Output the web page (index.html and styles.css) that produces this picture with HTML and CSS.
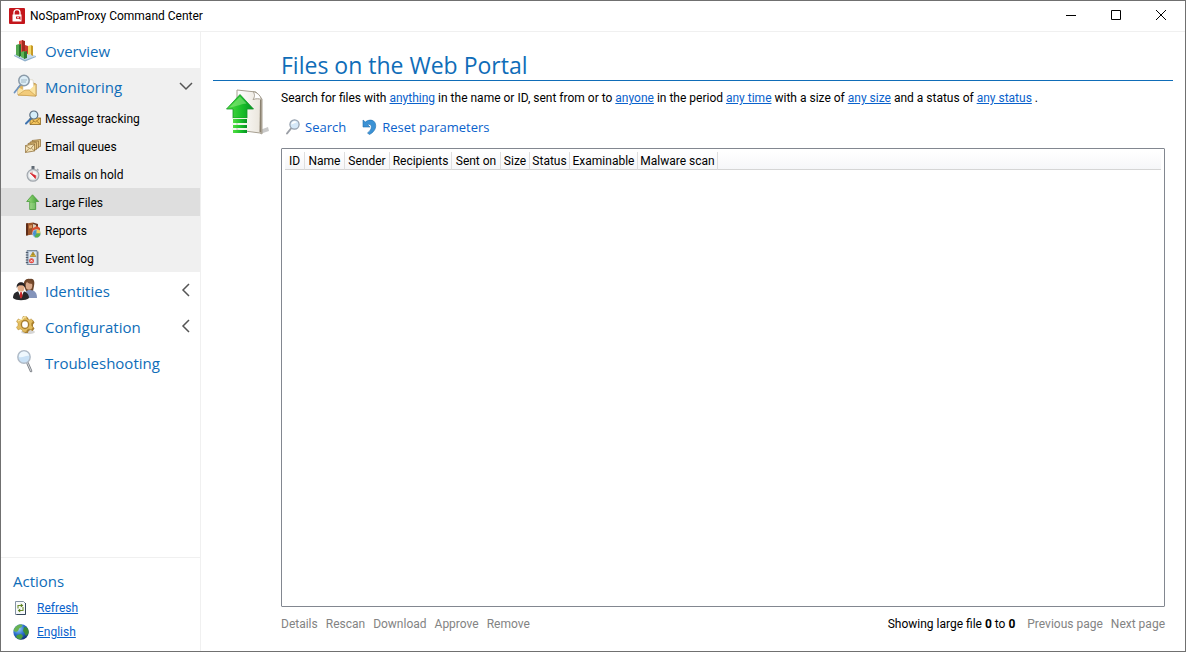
FILE: index.html
```html
<!DOCTYPE html>
<html lang="en">
<head>
    <meta charset="UTF-8">
    <meta name="viewport" content="width=device-width, initial-scale=1.0">
    <title>NoSpamProxy Command Center</title>
    <link rel="stylesheet" href="styles.css">
</head>
<body>
    <header class="titlebar">
        <svg class="app-icon" width="16" height="16" viewBox="0 0 16 16">
            <rect width="16" height="16" rx="1" fill="#c4161c"/>
            <path d="M5 7V4.500a3 2.800 0 0 1 6 0V7" fill="none" stroke="#fff" stroke-width="1.300"/>
            <path d="M3.500 6.500h9v7h-9z" fill="#fff"/>
            <path d="M7 8.500h4.500v3.500L10 10.800H7z" fill="#c4161c"/>
            <path d="M8 9.600h2" stroke="#fff" stroke-width=".8"/>
        </svg>
        <span class="app-name">NoSpamProxy Command Center</span>
        <div class="window-buttons">
            <button type="button" aria-label="Minimize"><svg width="12" height="12" viewBox="0 0 12 12"><path d="M1 5.500h10"/></svg></button>
            <button type="button" aria-label="Maximize"><svg width="12" height="12" viewBox="0 0 12 12"><path d="M1.500 .5h9v9h-9z"/></svg></button>
            <button type="button" aria-label="Close"><svg width="12" height="12" viewBox="0 0 12 12"><path d="M1 0l10 10M11 0L1 10"/></svg></button>
        </div>
    </header>

    <div class="window-body">
        <aside class="sidebar">
            <nav>
                <a class="nav-item" href="#overview">
                    <svg width="24" height="24" viewBox="0 0 24 24">
                        <path d="M1 17l10-4 12 5-11 5z" fill="#c3d9ec"/>
                        <path d="M1 17l11 5 11-4v1l-11 4.500L1 18z" fill="#8fb0cc"/>
                        <path d="M6 3l4-1v14l-4 1z" fill="#e0584a"/><path d="M9 2l3 1v15l-3-2z" fill="#a52a20"/>
                        <path d="M15 8l3-1v9l-3 1z" fill="#f3d867"/><path d="M18 7l2 1v10l-2-1z" fill="#c79a26"/>
                        <path d="M3 7l3-1 1 1v12l-4-2z" fill="#54a850"/><path d="M6 7l2-1v12l-2 1z" fill="#26702d"/>
                        <path d="M12 7l3 1v8l-3-1z" fill="#c93a2d"/>
                        <path d="M8 14l3-1 1 1v7l-4-2z" fill="#5db556"/><path d="M11 14l3-1v7l-3 1z" fill="#2c7a31"/>
                    </svg>
                    <span>Overview</span>
                </a>

                <div class="nav-group">
                    <a class="nav-item" href="#monitoring">
                        <svg width="24" height="24" viewBox="0 0 24 24">
                            <path d="M5 13l10-6 8 3v12L5 21z" fill="#e3b75f" stroke="#b78a3a" stroke-width=".7"/>
                            <path d="M10 5l10 1 1 9-11 2z" fill="#fff" stroke="#cfc6ad" stroke-width=".5"/>
                            <path d="M5 13l9 5 9-8v12L5 21z" fill="#fbe3a0"/>
                            <path d="M5 21l7-5h4l7 6z" fill="#f2cb7a" stroke="#c49848" stroke-width=".6"/>
                            <path d="M23 10v12" stroke="#b78a3a" stroke-width=".7"/>
                            <path d="M7 11.500L1.500 18.500" stroke="#6f94c0" stroke-width="1.800" stroke-linecap="round"/>
                            <circle cx="11" cy="6.500" r="5.200" fill="#d9ecf7" fill-opacity=".9" stroke="#8a9aa8" stroke-width="1.500"/>
                            <path d="M8 6h6M8 8h5" stroke="#92a9b8" stroke-width=".8"/>
                        </svg>
                        <span>Monitoring</span>
                        <svg class="chevron" width="14" height="14" viewBox="0 0 14 14"><path d="M1 4l6 6 6-6"/></svg>
                    </a>
                    <a class="nav-sub" href="#tracking">
                        <svg width="16" height="16" viewBox="0 0 16 16">
                            <path d="M5 8h10.500v6.500H5z" fill="#f4c55e" stroke="#8f6a22" stroke-width=".8"/>
                            <path d="M5 8l5.300 4L15.500 8M5 14.500l4-3.500M15.500 14.500l-4-3.500" fill="none" stroke="#8f6a22" stroke-width=".7"/>
                            <path d="M6 8.500L1 13.500" stroke="#3f74b0" stroke-width="2" stroke-linecap="round"/>
                            <circle cx="8.800" cy="5" r="4" fill="#d5eefa" stroke="#5c6f80" stroke-width="1.200"/>
                        </svg>
                        <span>Message tracking</span>
                    </a>
                    <a class="nav-sub" href="#queues">
                        <svg width="16" height="16" viewBox="0 0 16 16" stroke="#8d6c35" stroke-width=".7" fill="#e0c07e">
                            <path d="M7 2.500l8.500-1v7l-8 2z"/><path d="M5 4l8.500-1v7l-8 2z"/><path d="M3 5.500l8.500-1v7l-8 2z"/>
                            <path d="M.5 7.500l9-1.500v7l-9 1.500z" fill="#f4e3b8"/>
                            <path d="M.5 7.500l5 3.500 4-5M.5 14.500l3.500-4M9.500 13l-3-2.700" fill="none"/>
                        </svg>
                        <span>Email queues</span>
                    </a>
                    <a class="nav-sub" href="#hold">
                        <svg width="16" height="16" viewBox="0 0 16 16">
                            <path d="M6.500 0h3v3.500h-3z" fill="#5f6973"/><path d="M12 3l1.500 1.500" stroke="#a0a6ad" stroke-width="1.500"/>
                            <circle cx="8" cy="9.300" r="5.900" fill="#dce0e4" stroke="#a2a8ae" stroke-width="1.200"/>
                            <circle cx="8" cy="9.300" r="4" fill="#f6f6f6"/>
                            <path d="M8 9.300L4.800 7A4 4 0 0 1 8 5.300zM8 9.300l4 .2A4 4 0 0 1 9.800 13z" fill="#dfb9b7"/>
                            <path d="M5 7l5.500 2.500v3z" fill="#d8232c" stroke="#d8232c" stroke-width=".5"/>
                        </svg>
                        <span>Emails on hold</span>
                    </a>
                    <a class="nav-sub active" href="#files" aria-current="page">
                        <svg width="16" height="16" viewBox="0 0 16 16">
                            <defs><linearGradient id="leaf"><stop offset="0" stop-color="#a0df7e"/><stop offset="1" stop-color="#3c9c34"/></linearGradient></defs>
                            <path d="M7.500.8l6.200 6.700h-3v8h-6v-8h-3z" fill="url(#leaf)" stroke="#499b3b" stroke-width=".8"/>
                            <path d="M5 10h5M5 12h5M5 14h5" stroke="#d1efc3" stroke-width=".5"/>
                        </svg>
                        <span>Large Files</span>
                    </a>
                    <a class="nav-sub" href="#reports">
                        <svg width="16" height="16" viewBox="0 0 16 16">
                            <path d="M1 1.500l7-1v12l-7 1z" fill="#9c562c"/><path d="M1 1.500l2-.3v12l-2 .3z" fill="#5e2d18"/>
                            <path d="M4 3.500l3-.4v3l-3 .4z" fill="#d99258"/>
                            <path d="M8 .5l5 1.500v9l-5 1.500z" fill="#6e3620"/><path d="M8 2l3 1v4L8 6z" fill="#d9cdb8"/>
                            <path d="M7 6.500l5-2.500 3 2v5l-8 2z" fill="#d8502f"/>
                            <circle cx="11.500" cy="11.500" r="4" fill="#4a91ce" stroke="#e9f1f6" stroke-width=".5"/>
                            <path d="M11.500 11.500V7.500a4 4 0 0 1 4 4z" fill="#f0d055"/><path d="M11.500 11.500h4a4 4 0 0 1-6 3.400z" fill="#58b04b"/>
                        </svg>
                        <span>Reports</span>
                    </a>
                    <a class="nav-sub" href="#events">
                        <svg width="16" height="16" viewBox="0 0 16 16">
                            <path d="M2 .5h10v14H2z" fill="#b5c4d5" stroke="#66778c" stroke-width=".8"/>
                            <path d="M12 1.500h1.500V15H12z" fill="#7b8794"/><path d="M4 2h7.500v12H4z" fill="#dce6f0"/>
                            <path d="M.8 2.500h2.400M.8 5h2.400M.8 7.500h2.400M.8 10h2.400M.8 12.500h2.400" stroke="#505d6c"/>
                            <path d="M8 2l2.800 4.500H5.200z" fill="#f1c52d" stroke="#8a711c" stroke-width=".6"/><path d="M8 3.500v2" stroke="#333" stroke-width=".8"/>
                            <circle cx="6.500" cy="10.800" r="2.500" fill="#e34b43"/><path d="M5.500 9.800l2 2M7.500 9.800l-2 2" stroke="#fff" stroke-width=".8"/>
                        </svg>
                        <span>Event log</span>
                    </a>
                </div>

                <a class="nav-item" href="#identities">
                    <svg width="24" height="24" viewBox="0 0 24 24">
                        <path d="M11 8c-1-5 2-8 6-7 4-1 5 3 4 7l-1 5h-7z" fill="#6b4429"/>
                        <path d="M11 20c0-6 2-8 6-8 5 0 7 3 7 8z" fill="#8494bb"/>
                        <ellipse cx="16" cy="7.500" rx="3.300" ry="4.300" fill="#d9a98a"/>
                        <path d="M12 5c2-4 7-4 8 1-3 0-5-1-6-2z" fill="#7a4c2d"/>
                        <path d="M0 20c0-5 3-7 8-7s8 3 8 7c-3 3-13 3-16 0z" fill="#28282b"/>
                        <path d="M5 13h6l-3 7z" fill="#fff"/><path d="M7.400 14h1.300l.9 4-1.600 3-1.400-3z" fill="#c82528"/>
                        <ellipse cx="8" cy="9.500" rx="3.500" ry="4.300" fill="#e2ad89"/>
                        <path d="M3.800 10C2.500 3 13 2 12.300 10 11 8 10 7 8 7.500 6 7 4.500 8 3.800 10z" fill="#252123"/>
                    </svg>
                    <span>Identities</span>
                    <svg class="chevron" width="14" height="14" viewBox="0 0 14 14"><path d="M10 1L4 7l6 6"/></svg>
                </a>
                <a class="nav-item" href="#configuration">
                    <svg width="24" height="24" viewBox="0 0 24 24">
                        <ellipse cx="15" cy="18" rx="7" ry="2" fill="#bbb" opacity=".6"/>
                        <path d="M11.500 3.500h3.500l.7 2.500 2 .9 2.200-1 1.600 2.500-1.500 2v2l1.500 2-1.800 2.500-2.300-1-1.800 1-.7 2.100h-3.400z" fill="#a67c2c"/>
                        <path d="M10 2.500h3.500l.7 2.500 2 .9 2.200-1 1.600 2.500-1.500 2v2l1.500 2-1.800 2.500-2.300-1-1.800 1-.7 2.100H10l-.8-2.100-2-1-2 1-1.700-2.500 1.500-2v-2l-1.500-2 1.800-2.500 2 1 2-.9z" fill="#e3bd5f" stroke="#b38a36" stroke-width=".5"/>
                        <path d="M5 7l2-1 3-1 1-2h2" fill="none" stroke="#fff1b6"/>
                        <ellipse cx="12" cy="10.500" rx="3.600" ry="4" fill="#fff" stroke="#a87e2c" stroke-width="1.400"/>
                    </svg>
                    <span>Configuration</span>
                    <svg class="chevron" width="14" height="14" viewBox="0 0 14 14"><path d="M10 1L4 7l6 6"/></svg>
                </a>
                <a class="nav-item" href="#troubleshooting">
                    <svg width="24" height="24" viewBox="0 0 24 24">
                        <path d="M14.500 13l3.500 8" stroke="#7d8187" stroke-width="2.600" stroke-linecap="round"/>
                        <path d="M14.500 13l3.500 8" stroke="#d5d8dc" stroke-linecap="round"/>
                        <circle cx="11" cy="7" r="6.200" fill="#c9e1f6" stroke="#b0bac6" stroke-width="1.400"/>
                        <path d="M6 7a5 5 0 0 1 10-1c-3-1-6 2-10 1z" fill="#eff8fe"/>
                    </svg>
                    <span>Troubleshooting</span>
                </a>
            </nav>

            <section class="actions">
                <h2>Actions</h2>
                <a href="#refresh">
                    <svg width="16" height="16" viewBox="0 0 16 16">
                        <path d="M2.500 1.500h8l2 2v11h-10z" fill="#f7f9fb" stroke="#8493a3"/>
                        <path d="M12.500 3v11.500h-9" fill="none" stroke="#34465a"/>
                        <path d="M5 8.500V5.500h3M10 7v3.500H7" fill="none" stroke="#6b8e2a" stroke-width="1.100"/>
                        <path d="M7.800 3.500L10.300 5.500 7.800 7.500zM7.200 8.500L4.700 10.500l2.500 2z" fill="#5b7e1c"/>
                    </svg>
                    <span>Refresh</span>
                </a>
                <a href="#english">
                    <svg width="16" height="16" viewBox="0 0 16 16">
                        <defs><radialGradient id="sea" cx=".35" cy=".3" r=".75"><stop offset="0" stop-color="#9bd2fb"/><stop offset=".5" stop-color="#2e73cf"/><stop offset="1" stop-color="#0c2b6e"/></radialGradient></defs>
                        <circle cx="8" cy="8" r="7.700" fill="url(#sea)"/>
                        <path d="M3 2.500C6-.2 9 .4 9.500 1.500L8 3.500 6.500 4 5 7 3 8 .6 7C.8 5 1.500 3.700 3 2.500z" fill="#69b253"/>
                        <path d="M11 3l3 .5c1.500 2 2 4 1.500 6L13 12l-1.500-3L10 7z" fill="#3c8c35"/>
                        <path d="M4 11l4-1 2 2-2 3.500c-2 0-4-1-5-2.500z" fill="#4c9d3e"/>
                    </svg>
                    <span>English</span>
                </a>
            </section>
        </aside>

        <main class="content">
            <h1>Files on the Web Portal</h1>
            <svg class="page-icon" width="48" height="48" viewBox="0 0 48 48">
                <defs>
                    <linearGradient id="paper"><stop offset="0" stop-color="#fff"/><stop offset="1" stop-color="#e9e4da"/></linearGradient>
                    <linearGradient id="arrow"><stop offset="0" stop-color="#52de43"/><stop offset=".6" stop-color="#16bd28"/><stop offset="1" stop-color="#079226"/></linearGradient>
                </defs>
                <path d="M35 41l8-3 1 4-9 3z" fill="#c9c9c9"/>
                <path d="M12 1l19 2 6 7v35l-2-1-23-3z" fill="url(#paper)" stroke="#a69f91"/>
                <path d="M35 10l1.500 1v33l-2-1z" fill="#8b8271"/>
                <path d="M28 2.500c2 3 2 5 0 8 3-1 6-1 8.500 0-1-4-4-7-8.500-8z" fill="#fff" stroke="#a69f91"/>
                <path d="M15 5.500L1.500 20H8v9h14v-9h6.500z" fill="url(#arrow)" stroke="#159427" stroke-width=".8"/>
                <path d="M15 7.500L4.500 18.500c7-1 13-4 17-4z" fill="#9ced8c" opacity=".5"/>
                <path d="M8 30h14v4H8zM8 36h14v3H8zM8 41h14v3H8z" fill="url(#arrow)"/>
                <path d="M7 29.500h16M7 35h16M7 40h16" stroke="#e6f7df"/>
            </svg>
            <div class="panel">
                <p class="criteria">
                    Search for files with <a href="#name">anything</a> in the name or ID, sent from or to <a href="#sender">anyone</a> in the period <a href="#period">any time</a> with a size of <a href="#size">any size</a> and a status of <a href="#status">any status</a> .
                </p>
                <div class="toolbar">
                    <button type="button">
                        <svg width="16" height="16" viewBox="0 0 16 16">
                            <path d="M6 9.500L2 14.500" stroke="#9a9ea5" stroke-width="2" stroke-linecap="round"/>
                            <circle cx="9.500" cy="5.500" r="4.600" fill="#d5e8f8" stroke="#939eac" stroke-width="1.200"/>
                            <path d="M6.300 5.500a3.200 3.200 0 0 1 5.500-2.200z" fill="#fff"/>
                        </svg>
                        <span>Search</span>
                    </button>
                    <button type="button">
                        <svg width="16" height="16" viewBox="0 0 16 16">
                            <path d="M1 1l2.300 2C8-.5 13.500 1 13.700 6.500c.1 4-2.500 7-6.200 9L5.500 14c2.500-2 4-4 3.800-6.500C9.200 5.500 7.500 5 5.500 5.500L8 8H1z" fill="#3b92d5" stroke="#226fae" stroke-width=".6"/>
                        </svg>
                        <span>Reset parameters</span>
                    </button>
                </div>
                <div class="list">
                    <table>
                        <thead>
                            <tr>
                                <th class="col-id">ID</th>
                                <th class="col-name">Name</th>
                                <th class="col-sender">Sender</th>
                                <th class="col-recipients">Recipients</th>
                                <th class="col-sent">Sent on</th>
                                <th class="col-size">Size</th>
                                <th class="col-status">Status</th>
                                <th class="col-examinable">Examinable</th>
                                <th class="col-scan">Malware scan</th>
                                <td></td>
                            </tr>
                        </thead>
                    </table>
                </div>
                <footer class="list-footer">
                    <button type="button" disabled>Details</button>
                    <button type="button" disabled>Rescan</button>
                    <button type="button" disabled>Download</button>
                    <button type="button" disabled>Approve</button>
                    <button type="button" disabled>Remove</button>
                    <span class="range">Showing large file <b>0</b> to <b>0</b></span>
                    <button type="button" disabled>Previous page</button>
                    <button type="button" disabled>Next page</button>
                </footer>
            </div>
        </main>
    </div>
</body>
</html>
```
FILE: styles.css
```css
* {
    box-sizing: border-box;
}

body {
    display: flex;
    flex-direction: column;
    min-height: 100vh;
    margin: 0;
    border: 1px solid #707070;
    background: #fff;
    color: #000;
    font: 12px/16px "Segoe UI", Roboto, "Noto Sans", sans-serif;
}

svg {
    flex: none;
}

a {
    color: #0a62cc;
}

button {
    padding: 0;
    border: 0;
    background: none;
    color: inherit;
    font: inherit;
}

/* Title bar */
.titlebar {
    display: flex;
    align-items: center;
    height: 31px;
    padding-left: 8px;
    border-bottom: 1px solid #f0f0f0;
}

.app-name {
    margin-left: 5px;
}

.window-buttons {
    display: flex;
    margin-left: auto;
    padding-right: 2px;
}

.window-buttons button {
    display: flex;
    align-items: center;
    justify-content: center;
    width: 45px;
    height: 30px;
}

.window-buttons path {
    fill: none;
    stroke: #000;
}

.window-body {
    display: flex;
    flex: 1;
}

/* Sidebar */
.sidebar {
    display: flex;
    flex-direction: column;
    justify-content: space-between;
    flex: 0 0 200px;
    border-right: 1px solid #f0f0f0;
}

.nav-item {
    display: flex;
    align-items: center;
    gap: 8px;
    height: 36px;
    padding: 0 7px 0 12px;
    color: #0f6db8;
    font-size: 15px;
    line-height: 24px;
    text-decoration: none;
}

.nav-item,
.actions h2,
.toolbar,
h1 {
    font-family: "Segoe UI", "Open Sans", "Noto Sans", sans-serif;
}

.nav-item span,
.nav-sub span {
    padding-top: 2px;
}

.chevron {
    margin-left: auto;
    fill: none;
    stroke: #555;
    stroke-width: 1.5;
}

.nav-group {
    background: #f0f0f0;
}

.nav-sub {
    display: flex;
    align-items: center;
    gap: 4px;
    height: 28px;
    padding-left: 24px;
    color: #000;
    text-decoration: none;
}

.nav-sub.active {
    background: #dedede;
}

.actions {
    padding: 11px 12px 7px;
    border-top: 1px solid #f0f0f0;
}

.actions h2 {
    margin: 0 0 3px;
    color: #0f6db8;
    font-size: 15px;
    font-weight: normal;
    line-height: 24px;
}

.actions a {
    display: flex;
    align-items: center;
    gap: 8px;
    height: 24px;
}

/* Main page */
.content {
    display: grid;
    grid-template-columns: 68px 1fr;
    grid-template-rows: auto 1fr;
    flex: 1;
    padding: 18px 12px 19px;
}

h1 {
    grid-column: 1 / -1;
    margin: 0;
    padding-left: 68px;
    border-bottom: 1px solid #0f6db8;
    color: #0f6db8;
    font-size: 23px;
    font-weight: normal;
    line-height: 30px;
}

.page-icon {
    margin: 8px 0 0 12px;
}

.panel {
    display: flex;
    flex-direction: column;
    padding: 9px 8px 0 0;
}

.criteria {
    margin: 0;
}

.toolbar {
    display: flex;
    gap: 16px;
    margin: 9px 0;
    padding-left: 4px;
    color: #0a62cc;
    font-size: 13px;
    line-height: 24px;
}

.toolbar button {
    display: flex;
    align-items: center;
    gap: 4px;
}

.list {
    flex: 1;
    padding: 3px;
    border: 1px solid #828790;
    border-radius: 1px;
}

table {
    width: 100%;
    table-layout: fixed;
    border-collapse: separate;
    border-spacing: 0;
    background: linear-gradient(#fff, #f5f6f8);
}

th,
td {
    height: 18px;
    padding: 0;
    border-bottom: 1px solid #d5d5d5;
}

th {
    border-right: 1px solid #dfdfdf;
    font-weight: normal;
    text-align: center;
    white-space: nowrap;
}

.col-id { width: 20px; }
.col-name { width: 40px; }
.col-sender { width: 45px; }
.col-recipients { width: 62px; }
.col-sent { width: 49px; }
.col-size { width: 29px; }
.col-status { width: 40px; }
.col-examinable { width: 68px; }
.col-scan { width: 80px; }

.list-footer {
    display: flex;
    gap: 8px;
    padding-top: 9px;
}

.list-footer button {
    color: #838383;
}

.range {
    margin: 0 4px 0 auto;
}
```
